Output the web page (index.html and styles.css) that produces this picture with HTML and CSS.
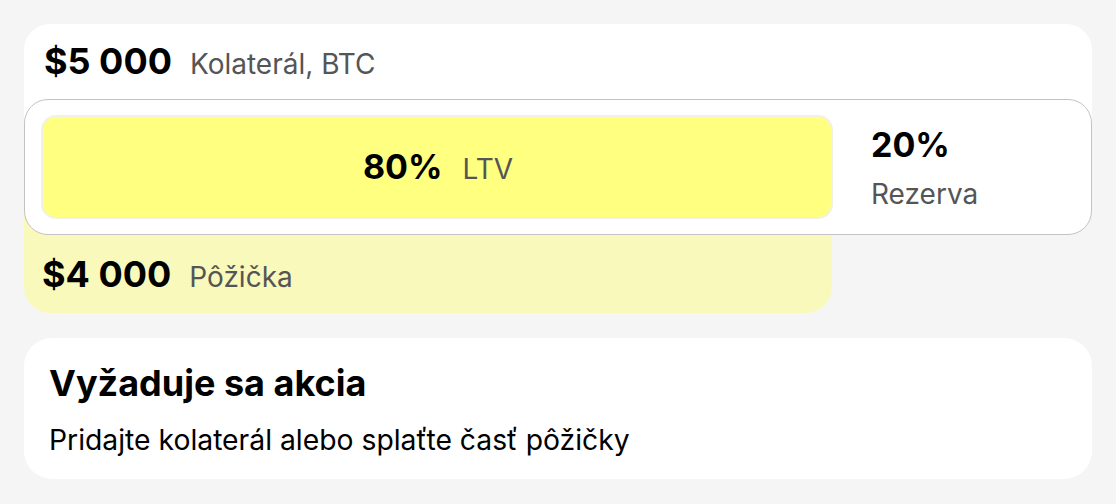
FILE: index.html
```html
<!DOCTYPE html>
<html lang="sk">
<head>
<meta charset="utf-8">
<link rel="stylesheet" href="styles.css">
</head>
<body>
<div class="page">
  <section class="ltv">
    <div class="collateral">
      <span class="amount">$5 000</span>
      <span class="label">Kolaterál, BTC</span>
    </div>
    <div class="meter">
      <div class="bar">
        <span class="pct">80%</span>
        <span class="label">LTV</span>
      </div>
      <div class="reserve">
        <span class="pct">20%</span>
        <span class="label">Rezerva</span>
      </div>
    </div>
    <div class="loan">
      <span class="amount">$4 000</span>
      <span class="label">Pôžička</span>
    </div>
  </section>
  <section class="action">
    <h2 class="action-title">Vyžaduje sa akcia</h2>
    <p class="action-text">Pridajte kolaterál alebo splaťte časť pôžičky</p>
  </section>
</div>
</body>
</html>
```

FILE: styles.css
```css
* { box-sizing: border-box; }
html, body { margin: 0; padding: 0; }
body {
  background: #f5f5f5;
  font-family: Inter, "Noto Sans", sans-serif;
  font-optical-sizing: none;
  font-variation-settings: "opsz" 14;
  color: #000;
  width: 1116px;
  height: 504px;
  overflow: hidden;
}
.page {
  padding: 24px 24px 0 24px;
  display: flex;
  flex-direction: column;
  gap: 25px;
}
.ltv {
  display: flex;
  flex-direction: column;
}
.collateral {
  background: #fff;
  border-radius: 26px 26px 0 0;
  height: 143px;
  padding: 15px 0 0 20px;
  display: flex;
  align-items: baseline;
  gap: 18px;
}
.amount {
  font-size: 36px;
  font-weight: 700;
}
.label {
  font-size: 28px;
  color: #555;
  font-weight: 400;
}
.meter {
  position: relative;
  z-index: 1;
  margin-top: -68px;
  height: 136px;
  background: #fff;
  border: 1.5px solid #c3c3c3;
  border-radius: 24px;
  padding: 15px 16px;
  display: flex;
  align-items: stretch;
  gap: 38px;
}
.bar {
  width: 792px;
  background: #ffff80;
  border: 2px solid #f1f1e4;
  border-radius: 15px;
  display: flex;
  align-items: baseline;
  justify-content: center;
  gap: 20px;
  padding-top: 30px;
  padding-left: 2px;
}
.pct {
  font-size: 34px;
  font-weight: 700;
  line-height: 40px;
}
.bar .label { line-height: 40px; }
.reserve {
  display: flex;
  flex-direction: column;
  justify-content: center;
  gap: 12px;
  padding-top: 2px;
}
.reserve .label { line-height: 34px; }
.loan {
  width: 808px;
  margin-top: -24px;
  padding: 45px 0 0 18px;
  height: 102px;
  background: #f9f9bb;
  border-radius: 0 0 26px 26px;
  display: flex;
  align-items: baseline;
  gap: 18px;
}
.loan .amount, .loan .label { line-height: 1; }
.action {
  background: #fff;
  border-radius: 28px;
  height: 141px;
  padding: 23px 25px 0 25px;
}
.action-title {
  margin: 0;
  font-size: 36px;
  font-weight: 700;
  line-height: 44px;
}
.action-text {
  margin: 18px 0 0 0;
  font-size: 28.3px;
  line-height: 34px;
}
```
